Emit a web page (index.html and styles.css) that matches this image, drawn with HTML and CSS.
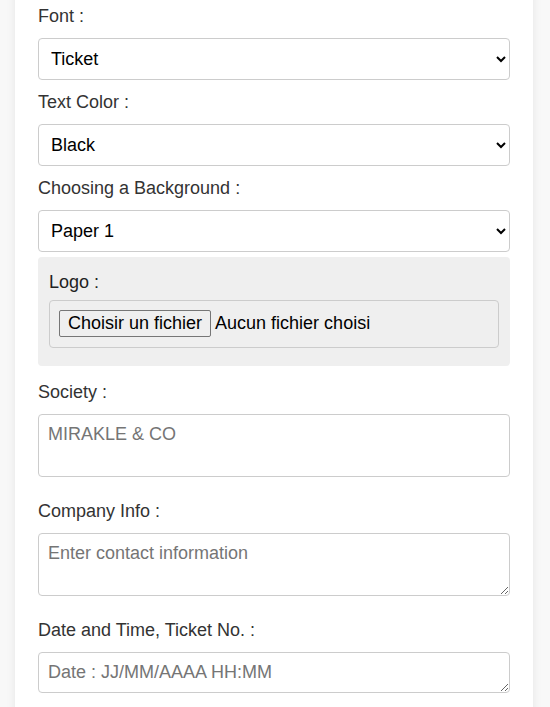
FILE: index.html
```html
<!DOCTYPE html>
<html lang="fr">
<head>
<meta charset="utf-8">
<title>Ticket generator</title>
<link rel="stylesheet" href="styles.css">
</head>
<body>
<main class="card">
  <label class="field-label" for="font">Font :</label>
  <select id="font" class="field-select">
    <option>Ticket</option>
  </select>

  <label class="field-label" for="color">Text Color :</label>
  <select id="color" class="field-select">
    <option>Black</option>
  </select>

  <label class="field-label" for="bg">Choosing a Background :</label>
  <select id="bg" class="field-select">
    <option>Paper 1</option>
  </select>

  <div class="logo-box">
    <div class="logo-label">Logo :</div>
    <div class="file-box">
      <button type="button" class="file-button">Choisir un fichier</button><span class="file-name">Aucun fichier choisi</span>
    </div>
  </div>

  <label class="field-label" for="society">Society :</label>
  <textarea id="society" class="field-text tall no-resize" placeholder="MIRAKLE &amp; CO"></textarea>

  <label class="field-label" for="info">Company Info :</label>
  <textarea id="info" class="field-text tall" placeholder="Enter contact information"></textarea>

  <label class="field-label" for="date">Date and Time, Ticket No. :</label>
  <textarea id="date" class="field-text short" placeholder="Date : JJ/MM/AAAA HH:MM"></textarea>
</main>
</body>
</html>
```

FILE: styles.css
```css
* {
  box-sizing: border-box;
}

html, body {
  margin: 0;
  padding: 0;
  background: #f8f8f8;
  font-family: "Liberation Sans", Arial, sans-serif;
  overflow: hidden;
}

.card {
  display: flex;
  flex-direction: column;
  margin: -41px 17px 0 15px;
  padding: 40px 23px 60px;
  background: #ffffff;
  box-shadow: 0 0 10px rgba(0, 0, 0, 0.08);
  border-radius: 8px;
}

.field-label {
  display: block;
  margin: 7px 0 11px;
  font-size: 18px;
  line-height: 21px;
  color: #333333;
}

.field-select {
  height: 42px;
  margin: 0 0 5px;
  padding: 0 8px;
  font-family: "Liberation Sans", Arial, sans-serif;
  font-size: 18px;
  color: #000000;
  background: #ffffff;
  border: 1px solid #cccccc;
  border-radius: 4px;
}

.logo-box {
  display: flex;
  flex-direction: column;
  margin: 0 0 9px;
  padding: 15px 11px 18px;
  background: #efefef;
  border-radius: 4px;
}

.logo-label {
  margin: 0 0 7px;
  font-size: 18px;
  line-height: 21px;
  color: #222222;
}

.file-box {
  display: flex;
  align-items: center;
  padding: 9px 9px 10px;
  border: 1px solid #cccccc;
  border-radius: 4px;
}

.file-button {
  margin: 0 4px 0 0;
  padding: 2px 8px;
  font-family: "Liberation Sans", Arial, sans-serif;
  font-size: 18px;
  line-height: 21px;
  color: #000000;
  background: #efefef;
  border: 1px solid #767676;
  border-radius: 2px;
}

.file-name {
  font-size: 18px;
  line-height: 21px;
  color: #000000;
}

.field-text {
  margin: 0 0 17px;
  padding: 9px 9px 8px;
  font-family: "Liberation Sans", Arial, sans-serif;
  font-size: 18px;
  line-height: 21px;
  color: #000000;
  background: #ffffff;
  border: 1px solid #cccccc;
  border-radius: 4px;
}

.field-text::placeholder {
  color: #757575;
}

.tall {
  height: 63px;
}

.short {
  height: 41px;
}

.no-resize {
  resize: none;
}
```
